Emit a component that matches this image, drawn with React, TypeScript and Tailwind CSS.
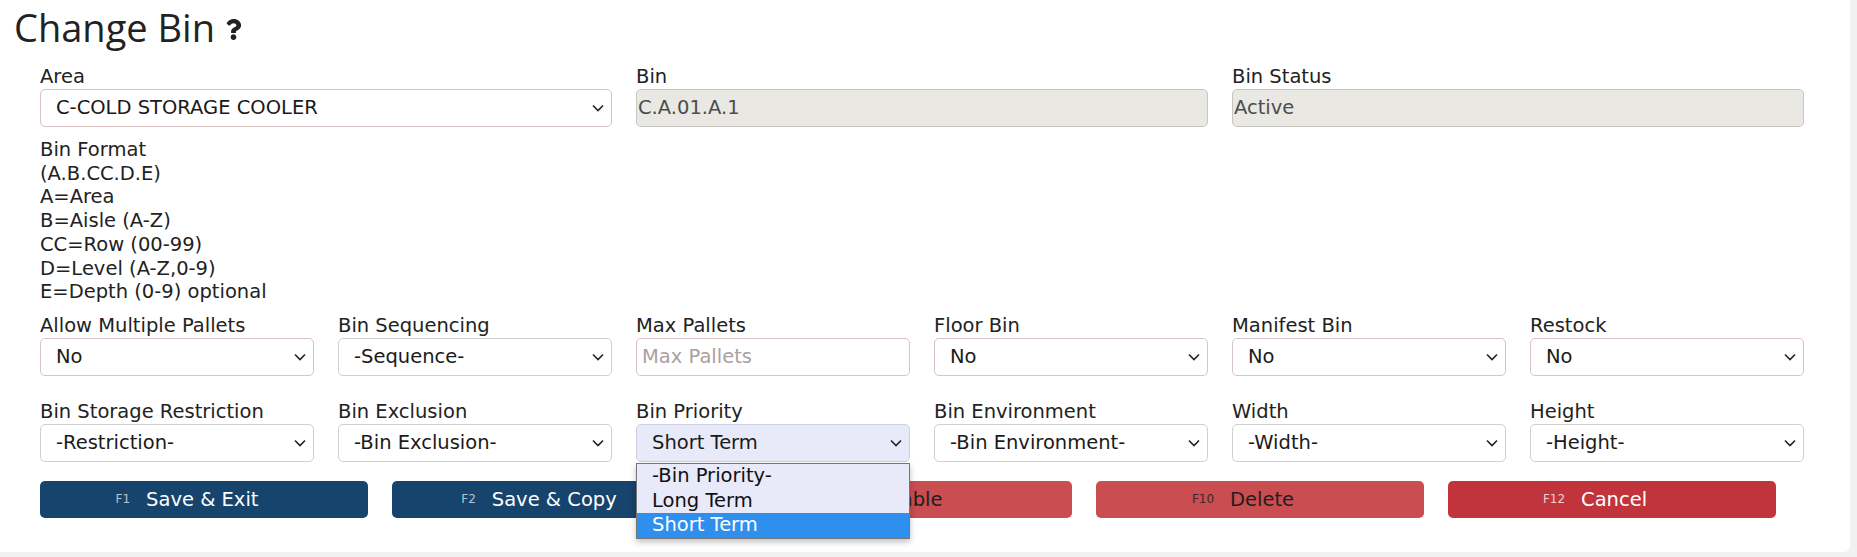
import React from "react"
import { FaQuestion } from "react-icons/fa"

const font = "font-['DejaVu_Sans',Verdana,sans-serif]"

function Chevron() {
  return (
    <svg width="12" height="8" viewBox="0 0 12 8" className="absolute right-[7px] top-1/2 -translate-y-1/2">
      <path d="M1 1.5l5 5 5-5" fill="none" stroke="#222" strokeWidth="1.6" />
    </svg>
  )
}

function Select({ label, value, rose, active }: { label: string; value: string; rose?: boolean; active?: boolean }) {
  return (
    <div className="flex flex-col">
      <label className="leading-[24px] text-[#222]">{label}</label>
      <div
        className={
          "relative h-[38px] rounded-[5px] border pl-[15px] flex items-center text-[#1a1a1a] " +
          (active ? "bg-[#e8eafa] border-[#cdd0e4]" : "bg-white ") +
          (active ? "" : rose ? "border-[#d8c2c2]" : "border-[#d0d0d0]")
        }
      >
        <span className="pr-6 whitespace-nowrap">{value}</span>
        <Chevron />
      </div>
    </div>
  )
}

function ReadOnly({ label, value }: { label: string; value: string }) {
  return (
    <div className="flex flex-col col-span-2">
      <label className="leading-[24px] text-[#222]">{label}</label>
      <div className="h-[38px] rounded-[5px] border border-[#c9c5c2] bg-[#e9e8e3] flex items-center pl-[1px] text-[#4d4d4d]">
        {value}
      </div>
    </div>
  )
}

function Btn({ k, text, tone }: { k: string; text: string; tone: "navy" | "pale" | "red" }) {
  const cls =
    tone === "navy"
      ? "bg-[#16446d] text-white"
      : tone === "red"
      ? "bg-[#c1343c] text-white"
      : "bg-[#c94d51] text-[#1e1e1e]"
  const kc = tone === "navy" ? "text-[#b7c3d0]" : tone === "red" ? "text-[#f0cfd1]" : "text-[#3a2a2a]"
  return (
    <div className={"h-[37px] rounded-[5px] flex items-center justify-center pr-[34px] " + cls}>
      <span className={"text-[12px] mr-[16px] " + kc}>{k}</span>
      <span>{text}</span>
    </div>
  )
}

export default function App() {
  return (
    <div className={"w-full h-[557px] bg-[#f1f1f1] " + font}>
      <div className="w-[1850px] h-[552px] bg-white rounded-br-[6px] text-[19.5px]">
        <div className="pt-[9px] pl-[14px] flex items-center gap-[8px] h-[46px]">
          <h1 className="font-['Open_Sans',sans-serif] text-[38px] leading-[37px] text-[#222]">Change Bin</h1>
          <FaQuestion className="text-[#222] mt-[4px]" size={21} />
        </div>

        <div className="ml-[40px] w-[1764px]">
          <div className="grid grid-cols-6 gap-x-6 mt-[19px]">
            <div className="col-span-2">
              <Select label="Area" value="C-COLD STORAGE COOLER" rose />
            </div>
            <ReadOnly label="Bin" value="C.A.01.A.1" />
            <ReadOnly label="Bin Status" value="Active" />
          </div>

          <div className="mt-[11px] leading-[23.7px] text-[#222]">
            <div>Bin Format</div>
            <div>(A.B.CC.D.E)</div>
            <div>A=Area</div>
            <div>B=Aisle (A-Z)</div>
            <div>CC=Row (00-99)</div>
            <div>D=Level (A-Z,0-9)</div>
            <div>E=Depth (0-9) optional</div>
          </div>

          <div className="grid grid-cols-6 gap-x-6 mt-[10px]">
            <Select label="Allow Multiple Pallets" value="No" rose />
            <Select label="Bin Sequencing" value="-Sequence-" />
            <div className="flex flex-col">
              <label className="leading-[24px] text-[#222]">Max Pallets</label>
              <div className="h-[38px] rounded-[5px] border border-[#d8c2c2] bg-white flex items-center pl-[5px] text-[#aaa0a0]">
                Max Pallets
              </div>
            </div>
            <Select label="Floor Bin" value="No" rose />
            <Select label="Manifest Bin" value="No" rose />
            <Select label="Restock" value="No" rose />
          </div>

          <div className="grid grid-cols-6 gap-x-6 mt-[24px]">
            <Select label="Bin Storage Restriction" value="-Restriction-" />
            <Select label="Bin Exclusion" value="-Bin Exclusion-" />
            <div className="relative">
              <Select label="Bin Priority" value="Short Term" active />
              <div className="absolute left-0 top-[100%] mt-[1px] w-full z-10 border border-[#777] bg-[#e8eafa] shadow-[0_3px_6px_rgba(0,0,0,0.25)] text-[#111]">
                <div className="h-[24.7px] leading-[24.7px] pl-[15px]">-Bin Priority-</div>
                <div className="h-[24.7px] leading-[24.7px] pl-[15px]">Long Term</div>
                <div className="h-[24.7px] leading-[24.7px] pl-[15px] bg-[#2f8fee] text-white">Short Term</div>
              </div>
            </div>
            <Select label="Bin Environment" value="-Bin Environment-" />
            <Select label="Width" value="-Width-" />
            <Select label="Height" value="-Height-" />
          </div>

          <div className="flex gap-6 mt-[19px]">
            <div className="w-[328px]"><Btn k="F1" text="Save & Exit" tone="navy" /></div>
            <div className="w-[328px]"><Btn k="F2" text="Save & Copy" tone="navy" /></div>
            <div className="w-[328px]"><Btn k="F9" text="Disable" tone="pale" /></div>
            <div className="w-[328px]"><Btn k="F10" text="Delete" tone="pale" /></div>
            <div className="w-[328px]"><Btn k="F12" text="Cancel" tone="red" /></div>
          </div>
        </div>
      </div>
    </div>
  )
}
